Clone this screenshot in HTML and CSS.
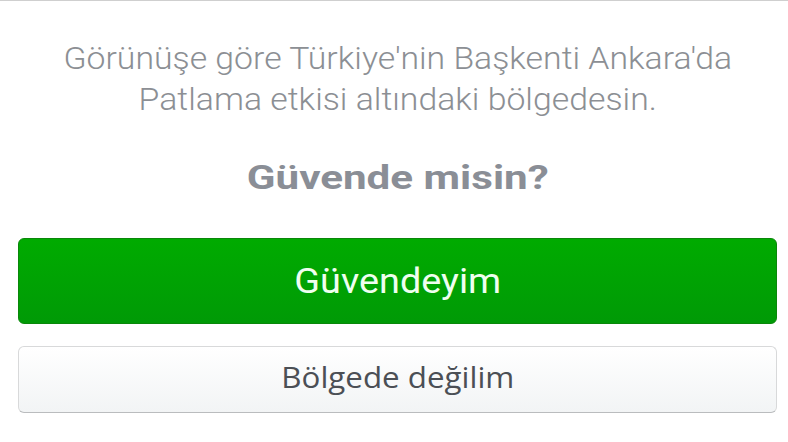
FILE: index.html
```html
<!DOCTYPE html>
<html lang="tr">
<head>
  <meta charset="UTF-8">
  <title>Güvende misin?</title>
  <meta name="viewport" content="width=device-width, initial-scale=1.0">
  <link rel="stylesheet" href="styles.css">
</head>
<body>

<main class="safety-check">
  <p class="message">
    <span class="wide">Görünüşe göre Türkiye'nin Başkenti Ankara'da</span><br>
    <span class="wide">Patlama etkisi altındaki bölgedesin.</span>
  </p>
  <h1 class="question"><span class="wide">Güvende misin?</span></h1>
  <div class="actions">
    <button type="button" class="btn btn-safe"><span class="wide">Güvendeyim</span></button>
    <button type="button" class="btn btn-away"><span class="wide">Bölgede değilim</span></button>
  </div>
</main>

</body>
</html>
```

FILE: styles.css
```css
html, body {
  margin: 0;
  padding: 0;
  background: #ffffff;
}
body {
  width: 788px;
  height: 442px;
  overflow: hidden;
  border-top: 1px solid #cfcfcf;
  box-sizing: border-box;
  font-family: Roboto, "Noto Sans", sans-serif;
}
.wide {
  display: inline-block;
  white-space: nowrap;
}
.safety-check {
  display: flex;
  flex-direction: column;
  align-items: center;
  padding: 37px 11px 0 18px;
}
.message {
  margin: 0;
  text-align: center;
  color: #8c8f94;
  font-size: 31px;
  line-height: 41px;
  font-weight: 300;
}
.message .wide {
  transform: scaleX(1.09);
}
.question {
  margin: 37px 0 0;
  color: #8a8e96;
  font-size: 34px;
  line-height: 40px;
  font-weight: bold;
}
.question .wide {
  transform: scaleX(1.24);
}
.actions {
  align-self: stretch;
  display: flex;
  flex-direction: column;
  gap: 22px;
  margin-top: 41px;
}
.btn {
  width: 100%;
  border-radius: 6px;
  cursor: pointer;
  padding: 0;
}
.btn-safe {
  height: 86px;
  background: linear-gradient(#00ab00, #009a06);
  border: 1px solid #0a870a;
  color: #effff0;
  font-family: Roboto, sans-serif;
  font-size: 35px;
}
.btn-safe .wide {
  transform: scaleX(1.08);
}
.btn-away {
  height: 67px;
  padding-bottom: 6px;
  background: linear-gradient(#ffffff, #f2f4f5);
  border: 1px solid #d8d9da;
  border-bottom-color: #babcbe;
  color: #4b4f55;
  font-family: "Open Sans", sans-serif;
  font-size: 29px;
}
.btn-away .wide {
  transform: scaleX(1.08);
}
```
